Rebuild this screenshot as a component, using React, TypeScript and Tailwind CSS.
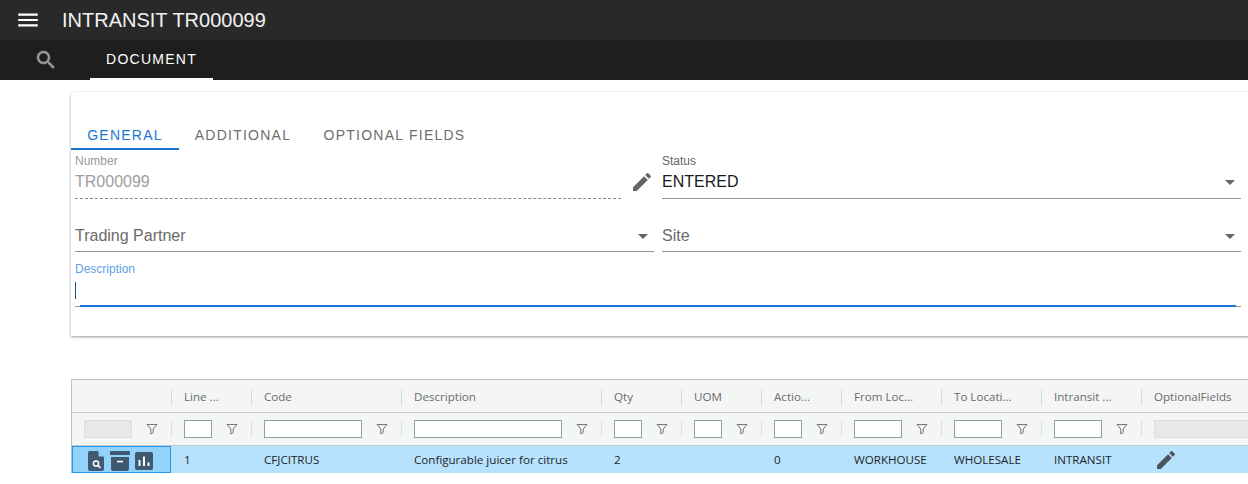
const pencil = "M3 17.25V21h3.75L17.81 9.94l-3.75-3.75L3 17.25zM20.71 7.04a1 1 0 0 0 0-1.41l-2.34-2.34a1 1 0 0 0-1.41 0l-1.83 1.83 3.75 3.75 1.83-1.83z"

const columns = [
  { label: "", width: "w-[99px]", filter: "disabled", value: "" },
  { label: "Line ...", width: "w-[80px]", filter: "w-[28px]", value: "1" },
  { label: "Code", width: "w-[150px]", filter: "w-[98px]", value: "CFJCITRUS" },
  { label: "Description", width: "w-[200px]", filter: "w-[148px]", value: "Configurable juicer for citrus" },
  { label: "Qty", width: "w-[80px]", filter: "w-[28px]", value: "2" },
  { label: "UOM", width: "w-[80px]", filter: "w-[28px]", value: "" },
  { label: "Actio...", width: "w-[80px]", filter: "w-[28px]", value: "0" },
  { label: "From Loc...", width: "w-[100px]", filter: "w-[48px]", value: "WORKHOUSE" },
  { label: "To Locati...", width: "w-[100px]", filter: "w-[48px]", value: "WHOLESALE" },
  { label: "Intransit ...", width: "w-[100px]", filter: "w-[48px]", value: "INTRANSIT" },
]

const Pencil = ({ className }: { className: string }) => (
  <svg viewBox="0 0 24 24" className={className} fill="currentColor">
    <path d={pencil} />
  </svg>
)

const Caret = () => (
  <svg viewBox="0 0 10 5" className="h-[5px] w-[10px] shrink-0 text-[#666]" fill="currentColor">
    <path d="M0 0h10L5 5z" />
  </svg>
)

const FilterIcon = () => (
  <svg viewBox="0 0 12 12" className="h-3 w-3 shrink-0 text-[#777]" fill="none" stroke="currentColor">
    <path d="M1 1.5h10L7.2 6v3.5l-2.4 1.5V6z" />
  </svg>
)

const SelectField = ({ label, width }: { label: string; width: string }) => (
  <div className={`flex h-[33px] items-center justify-between border-b border-[#949494] pt-[2px] pr-[6px] ${width}`}>
    <span className="text-base text-[#6b6b6b]">{label}</span>
    <Caret />
  </div>
)

const RowIcons = () => (
  <div className="flex items-center justify-center text-[#3f5a70]">
    <svg viewBox="0 0 16 20" className="h-[20px] w-[16px]">
      <path d="M2 0h8l6 6v12a2 2 0 0 1-2 2H2a2 2 0 0 1-2-2V2a2 2 0 0 1 2-2z" fill="currentColor" />
      <circle cx="8" cy="12.5" r="2.6" fill="none" stroke="#fff" strokeWidth="1.5" />
      <path d="M10 14.5l2.4 2.4" stroke="#fff" strokeWidth="1.6" />
      <path d="M10.5 0v5.5h5.5z" fill="#93d2fb" />
    </svg>
    <svg viewBox="0 0 20 20" className="ml-[6px] h-[20px] w-[20px]">
      <path d="M1 0h18a1 1 0 0 1 1 1v3H0V1a1 1 0 0 1 1-1zM1 6h18v12a2 2 0 0 1-2 2H3a2 2 0 0 1-2-2z" fill="currentColor" />
      <path d="M7 10.5h6" stroke="#fff" strokeWidth="1.6" />
    </svg>
    <svg viewBox="0 0 18 18" className="ml-[5px] h-[18px] w-[18px]">
      <rect width="18" height="18" rx="2" fill="currentColor" />
      <path d="M4.5 8v6M9 4.5V14M13.5 10.5V14" stroke="#fff" strokeWidth="2" />
    </svg>
  </div>
)

export default function App() {
  return (
    <div className="relative h-[484px] w-[1248px] overflow-hidden bg-white font-['Liberation_Sans',sans-serif]">
      <header className="flex h-10 items-center bg-[#292929] pl-[15px] text-white">
        <svg viewBox="0 0 24 24" className="h-[26px] w-[26px]" fill="currentColor">
          <path d="M3 18h18v-2H3v2zm0-5h18v-2H3v2zm0-7v2h18V6H3z" />
        </svg>
        <h1 className="ml-[21px] text-[20px] leading-none text-[#f2f2f2]">INTRANSIT TR000099</h1>
      </header>
      <nav className="flex h-10 bg-[#1e1e1e]">
        <div className="flex w-[90px] items-center pl-[34px]">
          <svg viewBox="0 0 24 24" className="h-6 w-6 text-[#9a9a9a]" fill="currentColor" stroke="currentColor" strokeWidth="0.5">
            <path d="M15.5 14h-.79l-.28-.27C15.41 12.59 16 11.11 16 9.5 16 5.91 13.09 3 9.5 3S3 5.91 3 9.5 5.91 16 9.5 16c1.61 0 3.09-.59 4.23-1.57l.27.28v.79l5 4.99L20.49 19l-4.99-5zm-6 0C7.01 14 5 11.99 5 9.5S7.01 5 9.5 5 14 7.01 14 9.5 11.99 14 9.5 14z" />
          </svg>
        </div>
        <div className="flex h-10 w-[123px] items-center justify-center border-b-2 border-white pb-[1px] text-sm tracking-[1.25px] text-white">
          DOCUMENT
        </div>
      </nav>

      <section className="mt-3 ml-[71px] h-[244px] w-[1190px] rounded-tl-[3px] bg-white shadow-[0_1px_3px_rgba(0,0,0,0.4)]">
        <div className="flex pt-[30px] text-sm tracking-[1.25px]">
          <div className="flex h-[28px] w-[108px] items-center justify-center border-b-2 border-[#1976d2] text-[#1976d2]">GENERAL</div>
          <div className="flex h-[28px] w-[128px] items-center justify-center pb-[2px] text-[#6e6e6e]">ADDITIONAL</div>
          <div className="flex h-[28px] w-[175px] items-center justify-center pb-[2px] text-[#6e6e6e]">OPTIONAL FIELDS</div>
        </div>

        <div className="mt-[3px] flex pl-[4px]">
          <div className="w-[546px] border-b border-dashed border-[#8a8a8a]">
            <div className="pt-[1px] text-xs leading-[14px] text-[#9a9a9a]">Number</div>
            <div className="h-[30px] pt-[4px] text-base leading-[20px] text-[#9e9e9e]">TR000099</div>
          </div>
          <div className="flex w-[41px] items-center justify-center pt-[12px] pl-[1px]">
            <Pencil className="h-6 w-6 text-[#666]" />
          </div>
          <div className="w-[579px] border-b border-[#949494]">
            <div className="pt-[1px] text-xs leading-[14px] text-[#666]">Status</div>
            <div className="flex h-[30px] items-center justify-between pr-[6px] pb-[2px] text-base text-[#1a1a1a]">
              ENTERED
              <Caret />
            </div>
          </div>
        </div>

        <div className="mt-[20px] flex gap-[8px] pl-[4px]">
          <SelectField label="Trading Partner" width="w-[579px]" />
          <SelectField label="Site" width="w-[579px]" />
        </div>

        <div className="mt-[10px] w-[1170px] pl-[4px]">
          <div className="text-xs leading-[14px] text-[#5ea2e6]">Description</div>
          <div className="h-[29px] pt-[6px]">
            <div className="h-[17px] w-px bg-[#1a4f8a]" />
          </div>
          <div className="flex h-[2px] items-end">
            <div className="h-px w-[5px] bg-[#949494]" />
            <div className="h-[2px] flex-1 bg-[#1976d2]" />
            <div className="h-px w-[5px] bg-[#949494]" />
          </div>
        </div>
      </section>

      <section className="mt-[43px] ml-[71px] w-[1190px] border-t border-l border-[#bcc3c3] font-['Open_Sans',sans-serif] text-[11.6px] text-[#1f1f1f]">
        <div className="flex h-[33px] items-center border-b border-[#c4c9c9] bg-[#f4f5f5] pt-[1px] text-[#6b6b6b]">
          {columns.map((c) => (
            <div key={c.label} className={`flex h-[16px] items-center ${c.width} ${c.label ? "border-l border-[#d8d8d8] pl-[12px]" : ""}`}>
              {c.label}
            </div>
          ))}
          <div className="flex h-[16px] flex-1 items-center border-l border-[#d8d8d8] pl-[12px]">OptionalFields</div>
        </div>

        <div className="flex h-[32px] items-center bg-[#f4f5f5] pb-[1px]">
          {columns.map((c, i) =>
            i === 0 ? (
              <div key="sel" className="flex h-[18px] w-[99px] items-center pr-[13px] pl-[12px]">
                <div className="h-[18px] w-[48px] border border-[#dcdcdc] bg-[#e8e8e8]" />
                <div className="ml-auto"><FilterIcon /></div>
              </div>
            ) : (
              <div key={c.label} className={`flex h-[16px] items-center border-l border-[#dedede] pr-[13px] pl-[12px] ${c.width}`}>
                <div className={`h-[18px] shrink-0 border border-[#8fa0a0] bg-white ${c.filter}`} />
                <div className="ml-auto"><FilterIcon /></div>
              </div>
            ),
          )}
          <div className="flex h-[16px] flex-1 items-center border-l border-[#dedede] pl-[12px]">
            <div className="h-[18px] w-full border border-[#dcdcdc] bg-[#e8e8e8]" />
          </div>
        </div>

        <div className="flex h-[28px] items-center border-t border-[#c4c9c9] bg-[#b6e2fd]">
          <div className="flex h-[27px] w-[99px] items-center justify-center border border-[#2196f3] bg-[#93d2fb] pt-[2px] pr-[3px]">
            <RowIcons />
          </div>
          {columns.slice(1).map((c) => (
            <div key={c.label} className={`pl-[13px] ${c.width}`}>{c.value}</div>
          ))}
          <div className="flex-1 pl-[13px]">
            <Pencil className="h-[24px] w-[24px] text-[#4a5560]" />
          </div>
        </div>
      </section>
    </div>
  )
}
